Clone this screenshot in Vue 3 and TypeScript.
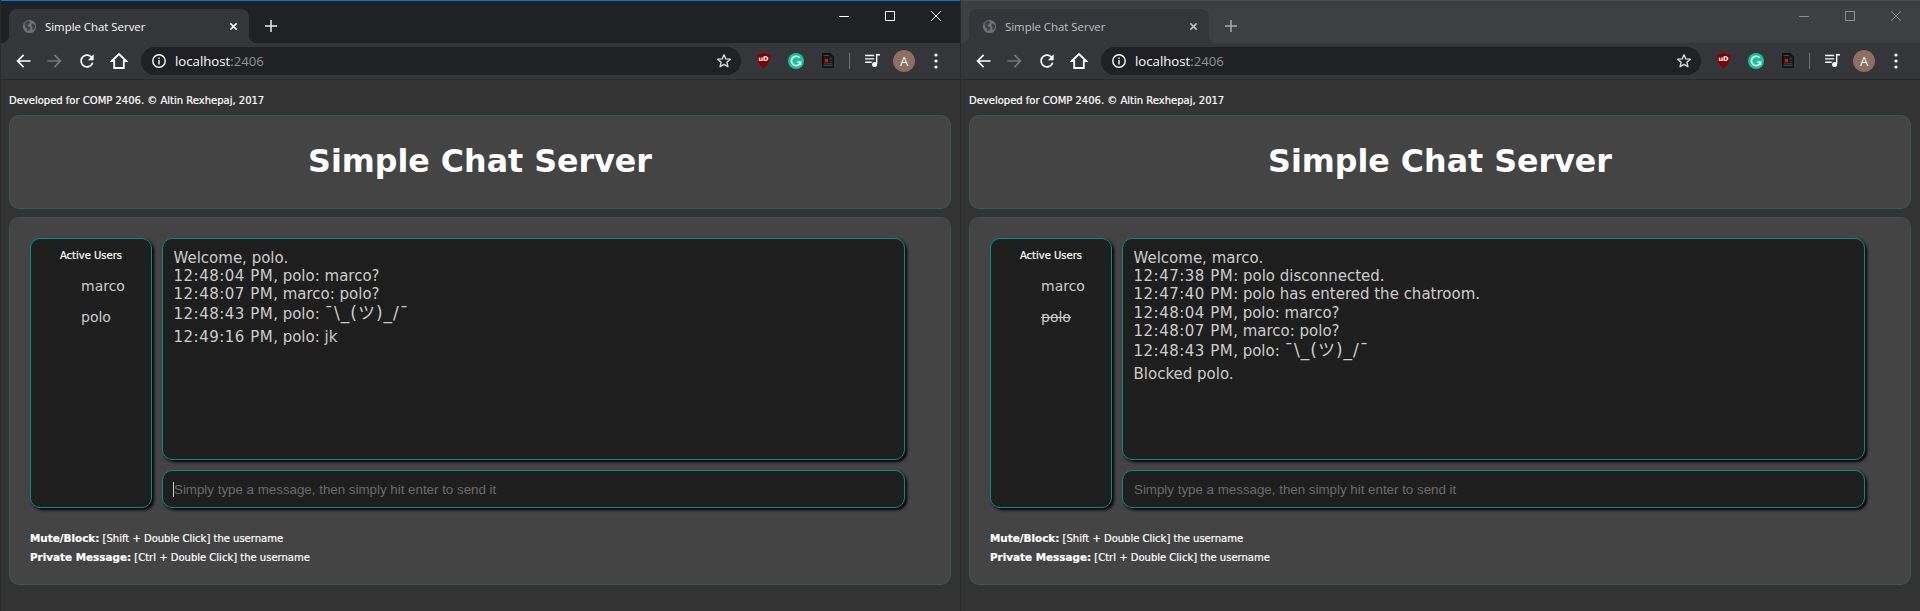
<template>
  <div class="screen">
    <section v-for="win in windows" :key="win.user" class="window" :class="{ active: win.active }">
      <div class="tabstrip">
        <div class="tab">
          <svg class="favicon" viewBox="0 0 16 16">
            <circle cx="8" cy="8" r="7" fill="#6f7276" />
            <path d="M3 4l3-2 3 1-1 2-2 1 1 2 2 1-1 3-2 1-1-3-2-2zM10 5l3 0 1 3-1 3-2 1 0-3-1-2z" fill="#3f4246" />
          </svg>
          <span class="tab-title">Simple Chat Server</span>
          <svg class="tab-close" viewBox="0 0 10 10"><path d="M1.5 1.5l7 7M8.5 1.5l-7 7" /></svg>
        </div>
        <svg class="new-tab" viewBox="0 0 12 12"><path d="M6 0v12M0 6h12" /></svg>
        <div class="controls">
          <span class="control"><svg viewBox="0 0 10 10" width="10" height="10"><path d="M0 5.5h10" /></svg></span>
          <span class="control"><svg viewBox="0 0 10 10" width="10" height="10"><path d="M.5.5h9v9h-9z" /></svg></span>
          <span class="control"><svg viewBox="0 0 10 10" width="10" height="10"><path d="M0 0l10 10M10 0L0 10" /></svg></span>
        </div>
      </div>

      <div class="toolbar">
        <span class="tool">
          <svg viewBox="0 0 24 24" width="20" height="20"><path fill="#fff" d="M21 11H7.83l5.59-5.59L12 4l-8 8 8 8 1.41-1.41L7.83 13H21v-2z" /></svg>
        </span>
        <span class="tool">
          <svg viewBox="0 0 24 24" width="20" height="20"><path fill="#74777b" d="M3 11h13.17l-5.59-5.59L12 4l8 8-8 8-1.41-1.41L16.17 13H3v-2z" /></svg>
        </span>
        <span class="tool">
          <svg viewBox="0 0 24 24" width="20" height="20"><path fill="#fff" d="M17.65 6.35C16.2 4.9 14.21 4 12 4c-4.42 0-7.99 3.58-7.99 8s3.57 8 7.99 8c3.73 0 6.84-2.55 7.73-6h-2.08c-.82 2.33-3.04 4-5.65 4-3.31 0-6-2.69-6-6s2.69-6 6-6c1.66 0 3.14.69 4.22 1.78L13 11h7V4l-2.35 2.35z" /></svg>
        </span>
        <span class="tool">
          <svg viewBox="0 0 18 18" width="18" height="18"><path fill="none" stroke="#fff" stroke-width="1.8" d="M9 2L1.8 9h2.4v7h9.6V9h2.4z" /></svg>
        </span>

        <div class="omnibox">
          <svg class="info" viewBox="0 0 16 16" width="16" height="16">
            <circle cx="8" cy="8" r="6.2" fill="none" stroke="#fff" stroke-width="1.4" />
            <path d="M7.3 7h1.4v4.6H7.3zM7.3 4.5h1.4v1.4H7.3z" fill="#fff" />
          </svg>
          <span class="host">localhost<span class="port">:2406</span></span>
          <svg class="star" viewBox="0 0 16 16" width="16" height="16">
            <path fill="none" stroke="#d8d8d8" stroke-width="1.4" stroke-linejoin="round" d="M8 1.8l1.8 4.1 4.5.4-3.4 3 1 4.4L8 11.4l-3.9 2.3 1-4.4-3.4-3 4.5-.4z" />
          </svg>
        </div>

        <span class="tool">
          <svg viewBox="0 0 16 18" width="15" height="17">
            <path fill="#800000" stroke="#5e2a2a" stroke-width=".6" d="M8 .6l7 2.2c.2 6.6-1.8 11.4-7 14.6C2.8 14.2.8 9.4 1 2.8z" />
            <text x="8" y="10" font-size="7" font-weight="700" text-anchor="middle" fill="#fff" font-family="'DejaVu Sans', sans-serif">uD</text>
          </svg>
        </span>
        <span class="tool shift">
          <svg viewBox="0 0 18 18" width="16" height="16">
            <circle cx="9" cy="9" r="9" fill="#15c39a" />
            <path fill="none" stroke="#fff" stroke-width="1.7" d="M13 5.2A5.3 5.3 0 1 0 14.2 10.5H10.5" />
            <path fill="#fff" d="M12.6 10.5h2.2v3h-2.2z" />
          </svg>
        </span>
        <span class="tool shift">
          <svg viewBox="0 0 14 18" width="12" height="15">
            <path fill="#1a1a1a" stroke="#050505" d="M.5.5h9l4 4v13H.5z" />
            <path stroke="#4d4d4d" stroke-width="1" d="M2 3h6M9 7h3M9 10h3M2 13h10M2 15h10" />
            <rect x="3" y="7" width="4" height="4" fill="#d01616" />
          </svg>
        </span>
        <span class="divider"></span>
        <span class="tool">
          <svg viewBox="0 0 20 18" width="17" height="15">
            <path stroke="#fff" stroke-width="1.7" d="M1 3h11M1 7h11M1 11h8" />
            <path fill="none" stroke="#fff" stroke-width="1.7" d="M15 13V2h4" />
            <circle cx="12.5" cy="13.8" r="3" fill="#fff" />
          </svg>
        </span>
        <span class="tool"><span class="avatar">A</span></span>
        <span class="tool">
          <svg viewBox="0 0 4 16" width="4" height="16"><circle cx="2" cy="2" r="1.6" fill="#fff" /><circle cx="2" cy="8" r="1.6" fill="#fff" /><circle cx="2" cy="14" r="1.6" fill="#fff" /></svg>
        </span>
      </div>

      <main class="page">
        <p class="credit">Developed for COMP 2406. © Altin Rexhepaj, 2017</p>
        <header class="panel title-panel">
          <h1>Simple Chat Server</h1>
        </header>
        <div class="panel chat-panel">
          <div class="chat-row">
            <aside class="box users">
              <h2>Active Users</h2>
              <ul>
                <li v-for="u in users" :key="u" :class="{ blocked: win.blocked.includes(u) }">{{ u }}</li>
              </ul>
            </aside>
            <div class="chat-col">
              <div class="box messages">
                <div v-for="(line, i) in win.messages" :key="i" :class="{ 'has-shrug': line.shrug }">
                  <span v-if="line.time" class="time">{{ line.time }}</span>{{ line.text }}<span v-if="line.shrug" class="shrug">{{ line.shrug }}</span>
                </div>
              </div>
              <div class="box compose">
                <span v-if="win.active" class="caret"></span>
                <input type="text" placeholder="Simply type a message, then simply hit enter to send it" />
              </div>
            </div>
          </div>
          <div class="help">
            <div><b>Mute/Block:</b> [Shift + Double Click] the username</div>
            <div><b>Private Message:</b> [Ctrl + Double Click] the username</div>
          </div>
        </div>
      </main>
    </section>
  </div>
</template>

<script setup lang="ts">
interface ChatLine {
  time?: string
  text: string
  shrug?: string
}

interface ChatWindow {
  user: string
  active: boolean
  blocked: string[]
  messages: ChatLine[]
}

const users = ['marco', 'polo']
const shrugLine: ChatLine = { time: '12:48:43 PM', text: ', polo: ', shrug: '¯\\_(ツ)_/¯' }

const windows: ChatWindow[] = [
  {
    user: 'polo',
    active: true,
    blocked: [],
    messages: [
      { text: 'Welcome, polo.' },
      { time: '12:48:04 PM', text: ', polo: marco?' },
      { time: '12:48:07 PM', text: ', marco: polo?' },
      shrugLine,
      { time: '12:49:16 PM', text: ', polo: jk' }
    ]
  },
  {
    user: 'marco',
    active: false,
    blocked: ['polo'],
    messages: [
      { text: 'Welcome, marco.' },
      { time: '12:47:38 PM', text: ': polo disconnected.' },
      { time: '12:47:40 PM', text: ': polo has entered the chatroom.' },
      { time: '12:48:04 PM', text: ', polo: marco?' },
      { time: '12:48:07 PM', text: ', marco: polo?' },
      shrugLine,
      { text: 'Blocked polo.' }
    ]
  }
]
</script>

<style scoped>
.screen {
  display: flex;
  width: 1920px;
  height: 611px;
  overflow: hidden;
  background: #333;
  font-family: "DejaVu Sans", Verdana, sans-serif;
}

.window {
  width: 960px;
  display: flex;
  flex-direction: column;
  border-left: 1px solid #2b2b2b;
  box-sizing: border-box;
}

/* title bar */
.tabstrip {
  height: 43px;
  box-sizing: border-box;
  display: flex;
  align-items: flex-end;
  padding-left: 8px;
  background: #3c4043;
  border-top: 1px solid #4a4d50;
}

.active .tabstrip {
  background: #202124;
  border-top-color: #0078d7;
}

.tab {
  position: relative;
  width: 240px;
  height: 34px;
  box-sizing: border-box;
  display: flex;
  align-items: center;
  padding: 0 11px 0 13px;
  background: #35363a;
  border-radius: 8px 8px 0 0;
}

.tab::before,
.tab::after {
  content: "";
  position: absolute;
  bottom: 0;
  width: 8px;
  height: 8px;
}

.tab::before {
  left: -8px;
  background: radial-gradient(circle at 0 0, transparent 8px, #35363a 8.5px);
}

.tab::after {
  right: -8px;
  background: radial-gradient(circle at 100% 0, transparent 8px, #35363a 8.5px);
}

.favicon {
  width: 15px;
  height: 15px;
  flex: none;
}

.tab-title {
  flex: 1;
  margin-left: 8px;
  font: 11.4px "Open Sans", "Noto Sans", sans-serif;
  color: #bdc1c6;
}

.active .tab-title {
  color: #fff;
}

.tab-close {
  width: 9px;
  height: 9px;
  fill: none;
  stroke: #bdc1c6;
  stroke-width: 1.7;
}

.active .tab-close {
  stroke: #fff;
}

.new-tab {
  width: 12px;
  height: 12px;
  margin: 0 0 11px 16px;
  fill: none;
  stroke: #a8abaf;
  stroke-width: 1.5;
}

.active .new-tab {
  stroke: #e8e8e8;
}

.controls {
  display: flex;
  margin-left: auto;
  align-self: flex-start;
  padding-right: 1px;
  height: 29px;
}

.control {
  width: 46px;
  display: flex;
  align-items: center;
  justify-content: center;
}

.control svg {
  fill: none;
  stroke: #8b8e91;
  stroke-width: 1;
}

.active .control svg {
  stroke: #fff;
}

/* toolbar */
.toolbar {
  height: 37px;
  box-sizing: border-box;
  display: flex;
  align-items: center;
  padding: 0 6px 1px 6px;
  background: #35363a;
  border-bottom: 1px solid #28292b;
}

.tool {
  width: 32px;
  height: 28px;
  flex: none;
  display: flex;
  align-items: center;
  justify-content: center;
}

.tool.shift svg {
  margin-left: 2px;
}

.omnibox {
  width: 600px;
  height: 28px;
  flex: none;
  box-sizing: border-box;
  display: flex;
  align-items: center;
  margin: 0 6px;
  padding: 0 9px 0 10px;
  background: #202124;
  border-radius: 14px;
}

.host {
  flex: 1;
  margin-left: 8px;
  font: 13.2px "Open Sans", "Noto Sans", sans-serif;
  color: #fff;
}

.port {
  color: #8f9296;
}

.divider {
  width: 13px;
  flex: none;
  height: 16px;
  background: linear-gradient(#6d6f72, #6d6f72) 6px 0 / 1px 100% no-repeat;
}

.avatar {
  width: 22px;
  height: 22px;
  border-radius: 50%;
  background: #8d6e63;
  color: #fff;
  font: 13px/22px "Open Sans", sans-serif;
  text-align: center;
}

/* page */
.page {
  flex: 1;
  padding: 15px 8px 0;
  margin-right: 1px;
  background: #333;
}

.credit {
  margin: 0;
  font-size: 10px;
  line-height: 12px;
  color: #fff;
  -webkit-text-stroke: 0.2px #fff;
}

.panel {
  background: #444;
  border: 1px solid #2f5a58;
  border-radius: 10px;
  box-sizing: border-box;
}

.title-panel {
  height: 94px;
  margin-top: 8px;
  padding-bottom: 2px;
  display: flex;
  align-items: center;
  justify-content: center;
}

h1 {
  margin: 0;
  font-size: 31.7px;
  font-weight: 700;
  color: #fff;
}

.chat-panel {
  height: 368px;
  margin-top: 8px;
  padding: 20px;
}

.chat-row {
  display: flex;
  gap: 10px;
  height: 270px;
}

.box {
  background: #1e1e1e;
  border: 1px solid #008f8a;
  border-radius: 10px;
  box-shadow: 2px 2px 3px #000;
  box-sizing: border-box;
}

.users {
  width: 122px;
  padding-top: 11px;
  color: #ccc;
  font-size: 14px;
}

h2 {
  margin: 0;
  text-align: center;
  font-size: 10px;
  line-height: 12px;
  font-weight: 400;
  color: #fff;
  -webkit-text-stroke: 0.2px #fff;
}

ul {
  list-style: none;
  margin: 14px 0 0;
  padding: 0 0 0 50px;
}

li {
  height: 31px;
  line-height: 20px;
}

.blocked {
  text-decoration: line-through;
}

.chat-col {
  width: 743px;
  display: flex;
  flex-direction: column;
  gap: 10px;
}

.messages {
  flex: 1;
  padding: 10px 10.5px;
  color: #ccc;
  font-size: 15px;
  line-height: 18.2px;
  font-family: "DejaVu Sans", "Noto Sans CJK JP", Verdana, sans-serif;
}

.time {
  letter-spacing: 0.5px;
}

.has-shrug {
  padding: 1.5px 0 5px;
}

.shrug {
  font-size: 17px;
  line-height: 1;
  letter-spacing: 1px;
}

.compose {
  position: relative;
  height: 38px;
  display: flex;
  align-items: center;
  padding: 0 11px;
}

.compose input {
  flex: 1;
  border: 0;
  padding: 0;
  outline: 0;
  background: transparent;
  color: #ccc;
  font: 13.33px "Liberation Sans", Arial, sans-serif;
}

.compose input::placeholder {
  color: #6b6b6b;
}

.caret {
  position: absolute;
  left: 10px;
  top: 11px;
  width: 1px;
  height: 15px;
  background: #ccc;
}

.help {
  margin-top: 21px;
  font-size: 10px;
  line-height: 19px;
  color: #fff;
  -webkit-text-stroke: 0.2px #fff;
}

.help b {
  font-size: 10.4px;
}
</style>
